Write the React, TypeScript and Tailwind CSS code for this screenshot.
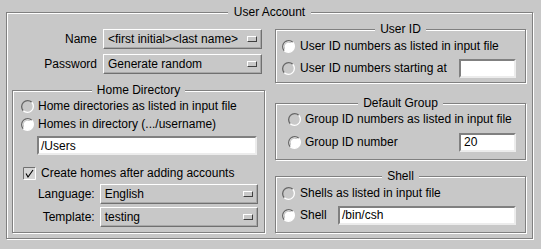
import React from "react";

const etched = "relative border border-[#808080] shadow-[inset_1px_1px_0_#fff,1px_1px_0_#fff]";

function Group({ title, className, children }: { title: string; className?: string; children: React.ReactNode }) {
  return (
    <div className={`${etched} ${className ?? ""}`}>
      <div className="absolute inset-x-0 -top-[8px] flex justify-center">
        <span className="bg-[#c8c8c8] px-[5px] leading-[14px]">{title}</span>
      </div>
      {children}
    </div>
  );
}

function Radio({ on }: { on?: boolean }) {
  return (
    <svg width="13" height="13" viewBox="0 0 13 13" className="shrink-0">
      {on && <circle cx="6.5" cy="6.5" r="5.8" fill="#fff" />}
      <path d="M10.74 2.26 A6 6 0 0 0 2.26 10.74" fill="none" stroke="#666" strokeWidth="1.3" />
      <path d="M2.26 10.74 A6 6 0 0 0 10.74 2.26" fill="none" stroke="#fff" strokeWidth="1.3" />
      {on && <path d="M8.8 2.6 A4.6 4.6 0 0 0 2.6 8.8" fill="none" stroke="#bdbdbd" strokeWidth="1" />}
    </svg>
  );
}

function Check() {
  return (
    <svg width="13" height="13" viewBox="0 0 13 13" className="shrink-0">
      <rect x="0" y="0" width="13" height="13" fill="#d6d6d6" />
      <path d="M0.5 12.5 V0.5 H12.5" fill="none" stroke="#707070" />
      <path d="M12.5 0.5 V12.5 H0.5" fill="none" stroke="#fff" />
      <path d="M3 6.5 L5 10 L10 3" fill="none" stroke="#000" strokeWidth="1.1" />
    </svg>
  );
}

function Menu({ value, className }: { value: string; className?: string }) {
  return (
    <div
      className={`flex h-[20px] items-center border border-t-white border-l-white border-b-[#707070] border-r-[#707070] pl-[4px] pr-[4px] shadow-[inset_-1px_-1px_0_#a8a8a8] ${className ?? ""}`}
    >
      <span className="flex-1 whitespace-nowrap">{value}</span>
      <span className="h-[6px] w-[10px] border border-t-white border-l-white border-b-[#404040] border-r-[#404040] bg-[#c8c8c8]" />
    </div>
  );
}

function Field({ value, className }: { value?: string; className?: string }) {
  return (
    <div
      className={`flex h-[19px] items-center border-2 border-t-[#808080] border-l-[#808080] border-b-[#ececec] border-r-[#ececec] bg-white pl-[2px] ${className ?? ""}`}
    >
      {value}
    </div>
  );
}

export default function App() {
  return (
    <div className="h-[249px] w-[541px] bg-[#c8c8c8] pl-[6px] pt-[12px] font-['Liberation_Sans',Arial,sans-serif] text-[12px] leading-[14px] text-black">
      <div className={`${etched} flex w-[527px] gap-[10px] pl-[5px] pt-[16px] pb-[5px]`}>
        <div className="absolute inset-x-0 -top-[8px] flex justify-center">
          <span className="bg-[#c8c8c8] px-[6px] leading-[14px]">User Account</span>
        </div>

        {/* left column */}
        <div className="flex w-[253px] flex-col">
          <div className="flex items-center gap-[6px]">
            <span className="w-[85px] text-right">Name</span>
            <Menu value="<first initial><last name>" className="w-[159px]" />
          </div>
          <div className="mt-[5px] flex items-center gap-[6px]">
            <span className="w-[85px] text-right">Password</span>
            <Menu value="Generate random" className="w-[159px]" />
          </div>

          <Group title="Home Directory" className="mt-[16px] flex flex-col pl-[8px] pr-[6px] pt-[6px] pb-[5px]">
            <div className="flex h-[18px] items-center gap-[4px]">
              <Radio />
              <span>Home directories as listed in input file</span>
            </div>
            <div className="flex h-[18px] items-center gap-[4px]">
              <Radio on />
              <span>Homes in directory (.../username)</span>
            </div>
            <Field value="/Users" className="mt-[3px] ml-[16px] w-[220px]" />
            <div className="mt-[9px] flex h-[18px] items-center gap-[5px] pl-[2px]">
              <Check />
              <span>Create homes after adding accounts</span>
            </div>
            <div className="mt-[2px] flex items-center gap-[5px]">
              <span className="w-[74px] text-right">Language:</span>
              <Menu value="English" className="w-[159px]" />
            </div>
            <div className="mt-[3px] flex items-center gap-[5px]">
              <span className="w-[74px] text-right">Template:</span>
              <Menu value="testing" className="w-[159px]" />
            </div>
          </Group>
        </div>

        {/* right column */}
        <div className="flex w-[251px] flex-col">
          <Group title="User ID" className="flex flex-col gap-[2px] pl-[6px] pr-[9px] pt-[6px] pb-[4px]">
            <div className="flex h-[20px] items-center gap-[5px]">
              <Radio on />
              <span>User ID numbers as listed in input file</span>
            </div>
            <div className="flex h-[20px] items-center gap-[5px]">
              <Radio />
              <span>User ID numbers starting at</span>
              <Field className="ml-auto w-[57px]" />
            </div>
          </Group>

          <Group title="Default Group" className="mt-[20px] flex flex-col gap-[3px] pl-[12px] pr-[9px] pt-[5px] pb-[7px]">
            <div className="flex h-[20px] items-center gap-[4px]">
              <Radio />
              <span>Group ID numbers as listed in input file</span>
            </div>
            <div className="flex h-[20px] items-center gap-[4px]">
              <Radio on />
              <span>Group ID number</span>
              <Field value="20" className="ml-auto w-[57px] pl-[3px]" />
            </div>
          </Group>

          <Group title="Shell" className="mt-[16px] flex flex-col gap-[2px] pl-[6px] pr-[9px] pt-[6px] pb-[7px]">
            <div className="flex h-[20px] items-center gap-[5px]">
              <Radio />
              <span>Shells as listed in input file</span>
            </div>
            <div className="flex h-[20px] items-center gap-[5px]">
              <Radio on />
              <span>Shell</span>
              <Field value="/bin/csh" className="ml-auto w-[178px]" />
            </div>
          </Group>
        </div>
      </div>
    </div>
  );
}
